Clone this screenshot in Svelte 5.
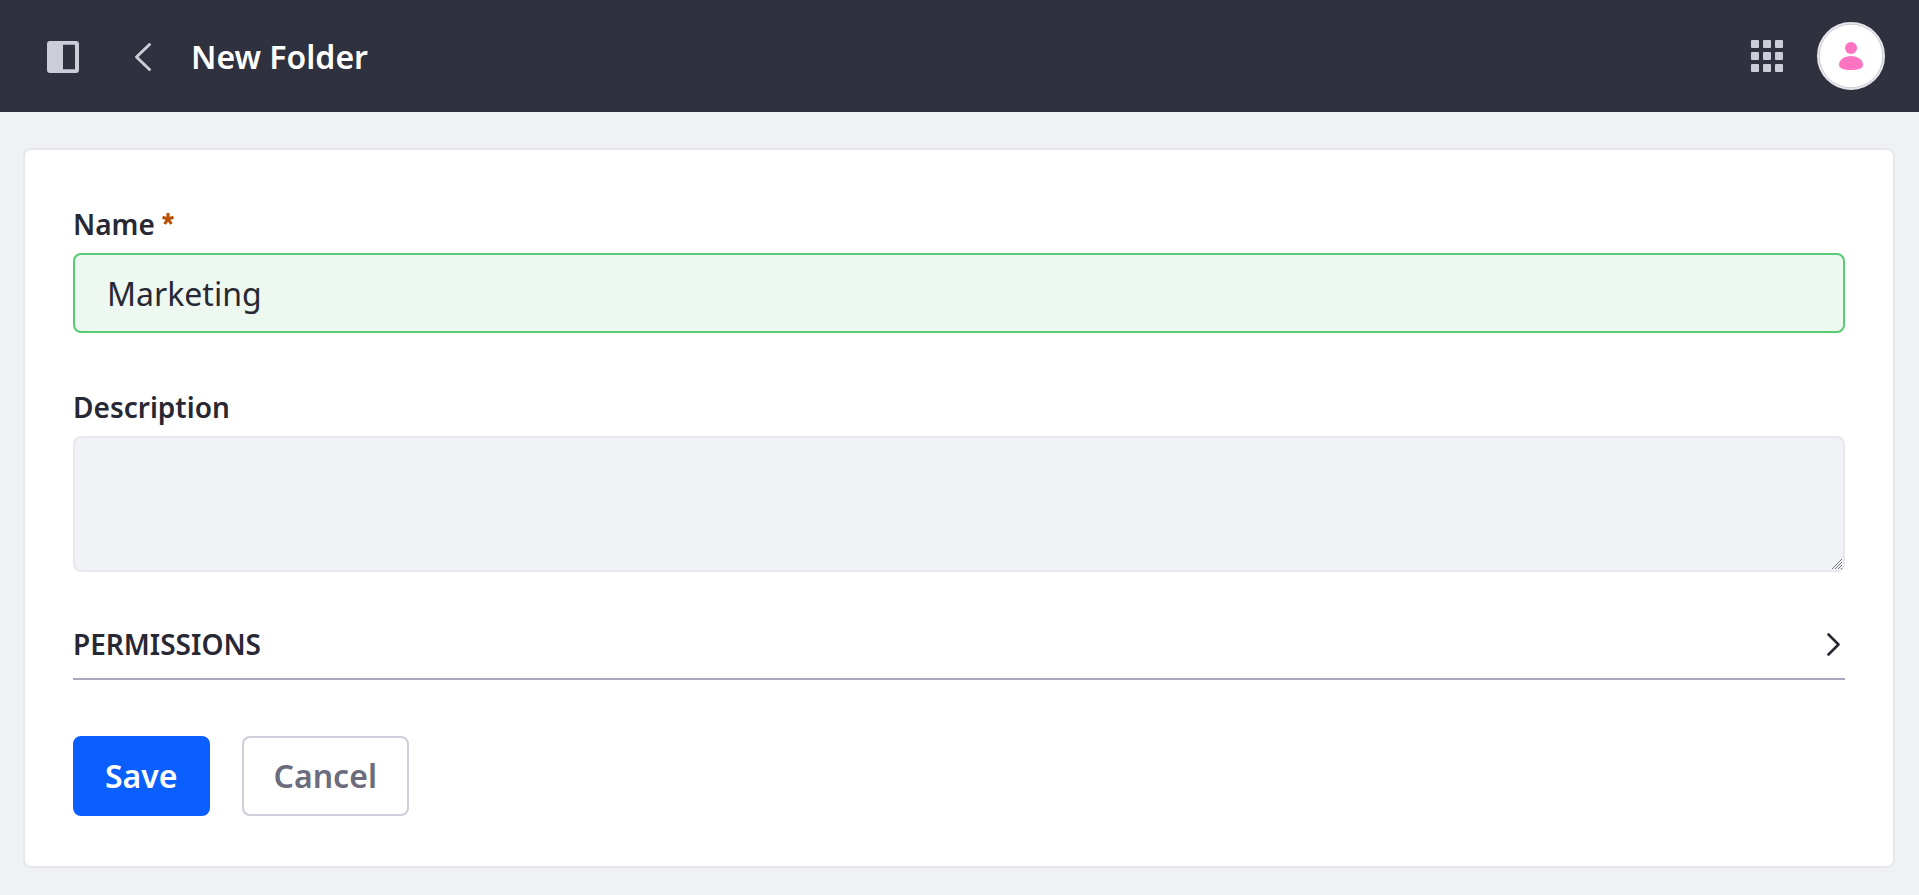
<script>
  let name = $state('Marketing');
  let description = $state('');
  const cells = [0, 12, 24];
</script>

<header>
  <div class="group start">
    <button class="icon" type="button" aria-label="Toggle menu">
      <svg width="32" height="32" viewBox="0 0 32 32">
        <path fill="currentColor" fill-rule="evenodd" d="M3 0H29Q32 0 32 3V29Q32 32 29 32H3Q0 32 0 29V3Q0 0 3 0ZM16 4V28H28V4Z" />
        <path fill="#a3a3b1" d="M16 3H28V4H16ZM16 28H28V29H16Z" />
      </svg>
    </button>
    <a class="icon back" href="#back" aria-label="Back">
      <svg width="32" height="32" viewBox="0 0 32 32">
        <path d="M22.500 3.500 9.500 16 22.500 28.500" fill="none" stroke="currentColor" stroke-width="3" stroke-linecap="round" stroke-linejoin="round" />
      </svg>
    </a>
    <h1>New Folder</h1>
  </div>
  <div class="group end">
    <button class="icon" type="button" aria-label="Applications">
      <svg width="32" height="32" viewBox="0 0 32 32" fill="currentColor">
        {#each cells as y}
          {#each cells as x}
            <rect {x} {y} width="8" height="8" rx="1" />
          {/each}
        {/each}
      </svg>
    </button>
    <button class="avatar" type="button" aria-label="User profile">
      <svg width="32" height="32" viewBox="0 0 32 32" fill="currentColor">
        <circle cx="16" cy="8" r="6" />
        <path d="M16 16C22.500 16 28 19.500 28 25C28 28.500 23.500 30 16 30S4 28.500 4 25C4 19.500 9.500 16 16 16Z" />
      </svg>
      <svg class="ring" viewBox="0 0 68 68" aria-hidden="true">
        <circle cx="34" cy="34" r="31.800" fill="none" stroke="#a9a9b3" stroke-width=".6" />
      </svg>
    </button>
  </div>
</header>

<main>
  <form class="sheet" onsubmit={(e) => e.preventDefault()}>
    <div class="field">
      <label for="name">Name
        <svg class="required" width="12" height="12" viewBox="0 0 12 12" aria-hidden="true">
          <path d="M6 6V0M6 6L.5 4.200M6 6L11.500 4.200M6 6L2.600 11M6 6L9.400 11" fill="none" stroke="currentColor" stroke-width="3" />
        </svg>
      </label>
      <input id="name" type="text" bind:value={name} required />
    </div>
    <div class="field description">
      <label for="description">Description</label>
      <div class="area">
        <textarea id="description" bind:value={description}></textarea>
        <svg class="grip" width="10" height="10" viewBox="0 0 10 10" aria-hidden="true">
          <path d="M0 10 10 0M3 10 10 3M6 10 10 6M9 10 10 9" fill="none" stroke="#66666b" stroke-width=".9" />
        </svg>
      </div>
    </div>
    <button class="panel" type="button" aria-expanded="false">
      <span>PERMISSIONS</span>
      <svg width="24" height="24" viewBox="0 0 24 24">
        <path d="M7.500 2.500 17.500 12.500 7.500 22.500" fill="none" stroke="currentColor" stroke-width="2.600" stroke-linecap="round" stroke-linejoin="round" />
      </svg>
    </button>
    <div class="actions">
      <button class="btn primary" type="submit">Save</button>
      <button class="btn secondary" type="button">Cancel</button>
    </div>
  </form>
</main>

<style>
  :global(body) {
    margin: 0;
    background: #f0f1f5;
    color: #272833;
    font-family: 'Noto Sans', 'Open Sans', sans-serif;
  }
  * {
    box-sizing: border-box;
  }
  button,
  input,
  textarea {
    font-family: inherit;
    margin: 0;
  }
  header {
    display: flex;
    justify-content: space-between;
    align-items: center;
    height: 112px;
    padding: 0 34px 0 31px;
    background: #30313f;
    color: #cdcdd9;
  }
  .group {
    display: flex;
    align-items: center;
  }
  .start {
    gap: 16px;
    padding-top: 2px;
  }
  .end {
    gap: 18px;
  }
  .icon {
    display: flex;
    align-items: center;
    justify-content: center;
    width: 64px;
    height: 64px;
    padding: 0;
    border: 0;
    background: none;
    color: inherit;
  }
  h1 {
    margin: 0;
    color: #fff;
    font-size: 32px;
    line-height: 48px;
    font-weight: 600;
  }
  .avatar {
    position: relative;
    display: flex;
    align-items: center;
    justify-content: center;
    width: 68px;
    height: 68px;
    padding: 0;
    border: 2px solid #e7e7ed;
    border-radius: 50%;
    background: #fff;
    color: #ff73c3;
  }
  .ring {
    position: absolute;
    inset: -2px;
  }
  main {
    padding: 36px 24px 27px 23px;
  }
  .sheet {
    padding: 48px 48px 50px;
    border: 2px solid #e7e7ed;
    border-radius: 8px;
    background: #fff;
  }
  .field {
    margin-bottom: 48px;
  }
  .description {
    margin-bottom: 40px;
  }
  label {
    display: block;
    margin-bottom: 8px;
    padding-top: 5px;
    font-size: 28px;
    line-height: 42px;
    font-weight: 600;
  }
  .required {
    color: #b95000;
    vertical-align: 10px;
  }
  input,
  textarea {
    display: block;
    width: 100%;
    padding: 0 32px;
    border: 2px solid #e7e7ed;
    border-radius: 8px;
    outline: none;
    background: #f1f2f5;
    color: #272833;
    font-size: 32px;
  }
  input {
    height: 80px;
    border-color: #5aca75;
    background: #edf8f0;
  }
  textarea {
    height: 136px;
    padding: 12px 32px;
    resize: vertical;
  }
  textarea::-webkit-resizer {
    background: transparent;
  }
  .area {
    position: relative;
  }
  .grip {
    position: absolute;
    right: 3px;
    bottom: 3px;
    pointer-events: none;
  }
  .panel {
    display: flex;
    align-items: center;
    justify-content: space-between;
    width: 100%;
    height: 68px;
    padding: 0 0 2px;
    border: 0;
    border-bottom: 2px solid #a7a9bc;
    background: none;
    color: #272833;
    font-size: 28px;
    font-weight: 600;
  }
  .actions {
    display: flex;
    gap: 32px;
    margin-top: 56px;
  }
  .btn {
    height: 80px;
    padding: 0 30px 2px;
    border: 2px solid;
    border-radius: 8px;
    font-size: 32px;
    font-weight: 600;
  }
  .primary {
    border-color: #0b5fff;
    background: #0b5fff;
    color: #fff;
  }
  .secondary {
    border-color: #cdced9;
    background: #fff;
    color: #6b6c7e;
  }
</style>
